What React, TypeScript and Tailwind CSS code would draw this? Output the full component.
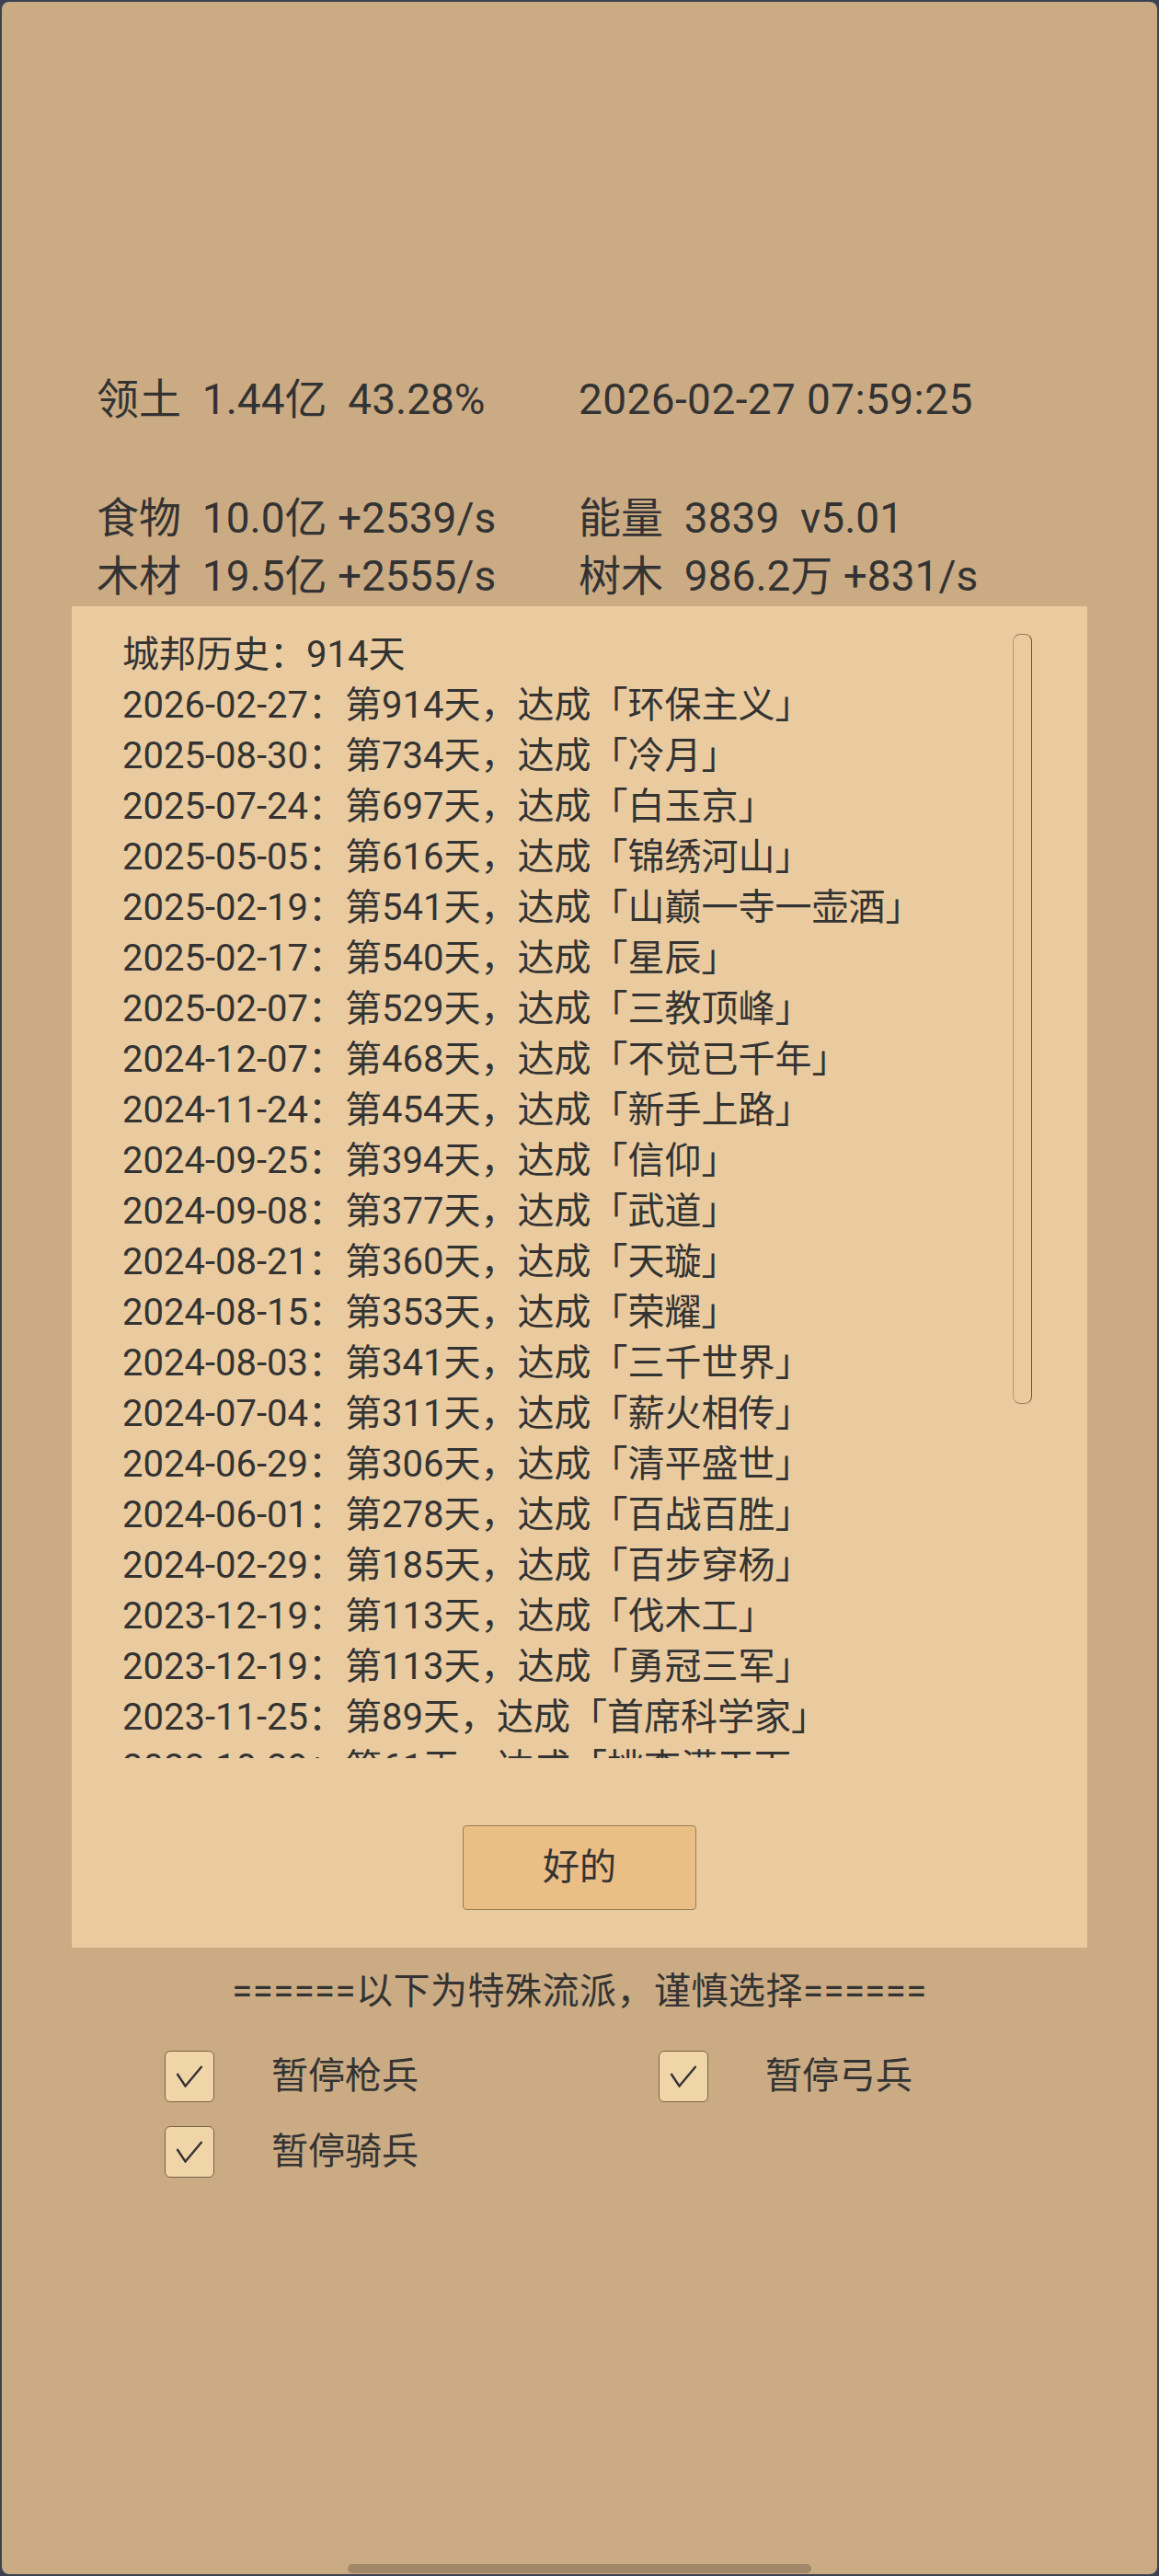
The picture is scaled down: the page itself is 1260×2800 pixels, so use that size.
const history = [
  ['2026-02-27', '第914天', '环保主义'],
  ['2025-08-30', '第734天', '冷月'],
  ['2025-07-24', '第697天', '白玉京'],
  ['2025-05-05', '第616天', '锦绣河山'],
  ['2025-02-19', '第541天', '山巅一寺一壶酒'],
  ['2025-02-17', '第540天', '星辰'],
  ['2025-02-07', '第529天', '三教顶峰'],
  ['2024-12-07', '第468天', '不觉已千年'],
  ['2024-11-24', '第454天', '新手上路'],
  ['2024-09-25', '第394天', '信仰'],
  ['2024-09-08', '第377天', '武道'],
  ['2024-08-21', '第360天', '天璇'],
  ['2024-08-15', '第353天', '荣耀'],
  ['2024-08-03', '第341天', '三千世界'],
  ['2024-07-04', '第311天', '薪火相传'],
  ['2024-06-29', '第306天', '清平盛世'],
  ['2024-06-01', '第278天', '百战百胜'],
  ['2024-02-29', '第185天', '百步穿杨'],
  ['2023-12-19', '第113天', '伐木工'],
  ['2023-12-19', '第113天', '勇冠三军'],
  ['2023-11-25', '第89天', '首席科学家'],
  ['2023-10-29', '第61天', '桃李满天下'],
]

function CheckItem({ label }: { label: string }) {
  return (
    <div className="flex items-center gap-[62px]">
      <div className="flex h-[56px] w-[54px] items-center justify-center rounded-[6px] border border-[#7a6244] bg-[#f0d5a9]">
        <svg width="30" height="24" viewBox="0 0 30 24" fill="none">
          <path d="M1.5 9 L10.5 22.5 L28.5 1" stroke="#333" strokeWidth="2.4" strokeLinejoin="miter" />
        </svg>
      </div>
      <span className="text-[40px] leading-[56px]">{label}</span>
    </div>
  )
}

export default function App() {
  return (
    <div className="min-h-[2800px] bg-[#3b4254] p-[2px]">
      <div className="flex h-[2796px] flex-col rounded-[8px] bg-[#cbab83] font-[Roboto,'Noto_Sans_CJK_SC',sans-serif] text-[#333]">
        {/* stats */}
        <div className="grid grid-cols-[524px_1fr] whitespace-pre pl-[103px] pt-[401px] text-[46px] leading-[63px]">
          <div>领土  1.44亿  43.28%</div>
          <div className="tracking-[0.4px]">2026-02-27 07:59:25</div>
          <div className="mt-[66px]">食物  10.0亿 +2539/s</div>
          <div className="mt-[66px]">能量  3839  v5.01</div>
          <div>木材  19.5亿 +2555/s</div>
          <div>树木  986.2万 +831/s</div>
        </div>

        {/* history dialog */}
        <div className="mx-[76px] mt-[1px] flex h-[1458px] flex-col bg-[#eacb9f] pl-[55px] pr-[60px] pt-[25px]">
          <div className="flex">
            <div className="h-[1227px] flex-1 overflow-hidden whitespace-pre text-[40px] leading-[55px]">
              <div>城邦历史：914天</div>
              {history.map(([d, n, t], i) => (
                <div key={i}>
                  {d}：{n}，达成「{t}」
                </div>
              ))}
            </div>
            <div className="mt-[5px] h-[837px] w-[21px] rounded-[8px] border border-[#b99a70] border-r-[#6b5232] border-t-[#9c7e58] border-b-[#9c7e58]" />
          </div>
          <button className="ml-[5px] mt-[73px] h-[92px] w-[254px] self-center rounded-[4px] border border-[#9c7b50] bg-[#e9bf86] text-[40px] text-[#333]">
            好的
          </button>
        </div>

        <div className="mt-[20px] text-center text-[40px] leading-[56px] tracking-[0.5px]">======以下为特殊流派，谨慎选择======</div>

        <div className="mt-[36px] grid grid-cols-[537px_1fr] gap-y-[26px] pl-[177px]">
          <CheckItem label="暂停枪兵" />
          <CheckItem label="暂停弓兵" />
          <CheckItem label="暂停骑兵" />
        </div>

        <div className="mb-[1px] mt-auto h-[10px] w-[504px] self-center rounded-full bg-[#a08868]" />
      </div>
    </div>
  )
}
